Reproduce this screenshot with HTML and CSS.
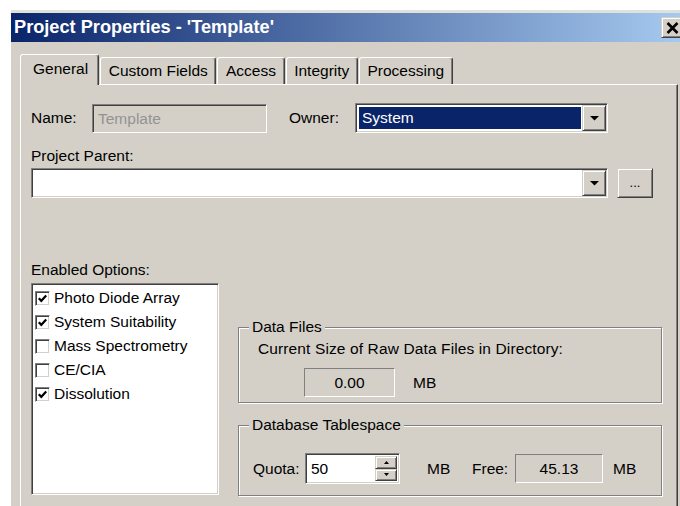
FILE: index.html
```html
<!DOCTYPE html>
<html lang="en">
<head>
<meta charset="utf-8">
<title>Project Properties</title>
<link rel="stylesheet" href="styles.css">
</head>
<body>
<div class="window">
  <div class="titlebar">
    <span class="title">Project Properties - 'Template'</span>
    <span class="close raised">
      <svg width="13" height="12" viewBox="0 0 13 12"><path d="M1.5 1 L11.5 11 M11.5 1 L1.5 11" stroke="#000" stroke-width="2.6" fill="none"/></svg>
    </span>
  </div>

  <div class="client">
    <div class="tabs">
      <div class="tab active">General</div>
      <div class="tab">Custom Fields</div>
      <div class="tab">Access</div>
      <div class="tab">Integrity</div>
      <div class="tab">Processing</div>
    </div>

    <div class="panel">
      <div class="row row-name">
        <span class="lbl lbl-name">Name:</span>
        <div class="sunken field name-field">Template</div>
        <span class="lbl lbl-owner">Owner:</span>
        <div class="sunken combo owner">
          <div class="combo-value selected">System</div>
          <div class="raised drop-btn"><svg width="9" height="5" viewBox="0 0 9 5"><path d="M0 0H9L4.5 4.5Z" fill="#000"/></svg></div>
        </div>
      </div>

      <div class="lbl parent-lbl">Project Parent:</div>
      <div class="row row-parent">
        <div class="sunken combo parent">
          <div class="combo-value"></div>
          <div class="raised drop-btn"><svg width="9" height="5" viewBox="0 0 9 5"><path d="M0 0H9L4.5 4.5Z" fill="#000"/></svg></div>
        </div>
        <div class="raised button browse">...</div>
      </div>

      <div class="lbl opts-lbl">Enabled Options:</div>
      <div class="lower">
        <div class="sunken listbox">
          <div class="item"><span class="sunken check on"><svg width="11" height="11" viewBox="0 0 11 11"><path d="M1.8 5.2 L4.3 7.8 L9.2 2.6" stroke="#000" stroke-width="2.2" fill="none"/></svg></span>Photo Diode Array</div>
          <div class="item"><span class="sunken check on"><svg width="11" height="11" viewBox="0 0 11 11"><path d="M1.8 5.2 L4.3 7.8 L9.2 2.6" stroke="#000" stroke-width="2.2" fill="none"/></svg></span>System Suitability</div>
          <div class="item"><span class="sunken check"></span>Mass Spectrometry</div>
          <div class="item"><span class="sunken check"></span>CE/CIA</div>
          <div class="item"><span class="sunken check on"><svg width="11" height="11" viewBox="0 0 11 11"><path d="M1.8 5.2 L4.3 7.8 L9.2 2.6" stroke="#000" stroke-width="2.2" fill="none"/></svg></span>Dissolution</div>
        </div>

        <div class="groups">
          <fieldset class="group data-files">
            <legend>Data Files</legend>
            <div class="gb-text">Current Size of Raw Data Files in Directory:</div>
            <div class="size-row">
              <div class="readout size-readout">0.00</div>
              <span class="unit">MB</span>
            </div>
          </fieldset>

          <fieldset class="group tablespace">
            <legend>Database Tablespace</legend>
            <div class="quota-row">
              <span class="lbl quota-lbl">Quota:</span>
              <div class="sunken spinner">
                <div class="spin-value">50</div>
                <div class="spin-btns">
                  <div class="raised spin-btn"><svg width="5" height="3" viewBox="0 0 5 3"><path d="M2.5 0L5 3H0Z" fill="#000"/></svg></div>
                  <div class="raised spin-btn"><svg width="5" height="3" viewBox="0 0 5 3"><path d="M0 0H5L2.5 3Z" fill="#000"/></svg></div>
                </div>
              </div>
              <span class="unit quota-unit">MB</span>
              <span class="lbl free-lbl">Free:</span>
              <div class="readout free-readout">45.13</div>
              <span class="unit free-unit">MB</span>
            </div>
          </fieldset>
        </div>
      </div>
    </div>
  </div>
</div>
</body>
</html>
```

FILE: styles.css
```css
* { box-sizing: border-box; }

html, body { margin: 0; padding: 0; }

body {
  width: 680px;
  height: 506px;
  overflow: hidden;
  background: #fff;
  font-family: "Liberation Sans", Arial, sans-serif;
  font-size: 15.5px;
  color: #000;
}

/* 3D frames in the classic look */
.sunken {
  border: 1px solid;
  border-color: #808080 #fff #fff #808080;
  box-shadow: inset 1px 1px 0 #404040, inset -1px -1px 0 #d4d0c8;
}

.raised {
  background: #d4d0c8;
  border: 1px solid;
  border-color: #d4d0c8 #404040 #404040 #d4d0c8;
  box-shadow: inset 1px 1px 0 #fff, inset -1px -1px 0 #808080;
}

/* window frame */
.window {
  margin: 10px 0 0 11px;
  width: 674px;
  height: 496px;
  background: #d4d0c8;
  border-top: 3px solid #e2e0da;
}

.titlebar {
  height: 29px;
  display: flex;
  align-items: center;
  padding-left: 3px;
  background: linear-gradient(to right, #0a246a, #a6caf0);
}

.title {
  color: #fff;
  font-weight: bold;
  font-size: 18.2px;
}

.close {
  margin-left: auto;
  margin-right: 2px;
  width: 22px;
  height: 21px;
  display: flex;
  align-items: center;
  justify-content: center;
  padding-left: 1px;
}

.client {
  padding-top: 12px;
}

/* tab strip */
.tabs {
  display: flex;
  align-items: flex-end;
  height: 30px;
  margin-left: 9px;
}

.tab {
  height: 27px;
  padding: 0 7.6px;
  margin-right: 1px;
  line-height: 25px;
  border-top: 1px solid #fff;
  border-left: 1px solid #fff;
  border-right: 1px solid #404040;
  border-radius: 3px 3px 0 0;
  box-shadow: inset -1px 0 0 #808080;
}

.tab.active {
  height: 31px;
  padding: 0 10px 0 12px;
  line-height: 27px;
  margin-bottom: -1px;
  background: #d4d0c8;
  position: relative;
  z-index: 1;
}

/* page of the General tab */
.panel {
  margin-left: 9px;
  width: 658px;
  height: 440px;
  padding: 18px 0 0 10px;
  border-top: 1px solid #fff;
  border-left: 1px solid #fff;
  border-right: 1px solid #404040;
  box-shadow: inset -1px 0 0 #808080;
}

.row {
  display: flex;
  align-items: center;
}

.lbl { line-height: 18px; }

.row-name { height: 30px; }

.lbl-name { width: 61px; }

.field {
  height: 29px;
  line-height: 27px;
  padding-left: 5px;
}

.name-field {
  width: 175px;
  color: #939393;
}

.lbl-owner {
  margin-left: 22px;
  width: 66px;
}

.combo {
  height: 30px;
  display: flex;
  padding: 1px;
  background: #fff;
}

.owner { width: 253px; }

.combo-value {
  flex: 1;
  margin: 2px 1px 2px 2px;
  padding-left: 3px;
  line-height: 22px;
}

.combo-value.selected {
  background: #0a246a;
  color: #fff;
}

.drop-btn {
  width: 24px;
  display: flex;
  align-items: center;
  justify-content: center;
  padding-top: 1px;
}

.parent-lbl { margin-top: 14px; }

.row-parent { margin-top: 3px; }

.parent { width: 577px; }

.button {
  height: 30px;
  display: flex;
  align-items: center;
  justify-content: center;
}

.browse {
  width: 36px;
  margin-left: 9px;
  font-size: 13px;
  padding-bottom: 2px;
}

.opts-lbl { margin-top: 63px; }

.lower {
  display: flex;
  align-items: flex-start;
  margin-top: 4px;
}

/* enabled options list */
.listbox {
  width: 188px;
  height: 212px;
  background: #fff;
  padding: 2px 0 0 3px;
}

.item {
  height: 24px;
  display: flex;
  align-items: center;
}

.check {
  width: 15px;
  height: 15px;
  margin-right: 4px;
  background: #fff;
  display: flex;
  align-items: center;
  justify-content: center;
}

/* group boxes */
.groups {
  margin-left: 19px;
  width: 424px;
}

.group {
  margin: 35px 0 0;
  padding: 0 0 5px 10px;
  min-width: 0;
  border: 1px solid #808080;
  box-shadow: inset 1px 1px 0 #fff, 1px 1px 0 #fff;
}

.group legend {
  padding: 0 3px;
  line-height: 18px;
  background: #d4d0c8;
}

.gb-text {
  margin: 4px 0 0 9px;
  line-height: 18px;
  letter-spacing: 0.12px;
}

.size-row {
  display: flex;
  align-items: center;
  margin: 10px 0 0 55px;
}

.readout {
  height: 29px;
  line-height: 27px;
  text-align: center;
  border: 1px solid;
  border-color: #808080 #fff #fff #808080;
}

.size-readout { width: 91px; }

.unit { margin-left: 18px; }

.tablespace {
  margin-top: 13px;
  padding-bottom: 11px;
}

.quota-row {
  display: flex;
  align-items: center;
  margin: 19px 0 0 4px;
}

.quota-lbl { width: 52px; }

.spinner {
  width: 95px;
  height: 31px;
  background: #fff;
  display: flex;
  padding: 2px;
}

.spin-value {
  flex: 1;
  padding-left: 3px;
  line-height: 25px;
}

.spin-btns {
  width: 22px;
  display: flex;
  flex-direction: column;
}

.spin-btn {
  flex: 1;
  display: flex;
  align-items: center;
  justify-content: center;
}

.quota-unit {
  margin-left: 27px;
  width: 45px;
}

.free-lbl { width: 43px; }

.free-readout { width: 88px; }

.free-unit { margin-left: 10px; }
```
